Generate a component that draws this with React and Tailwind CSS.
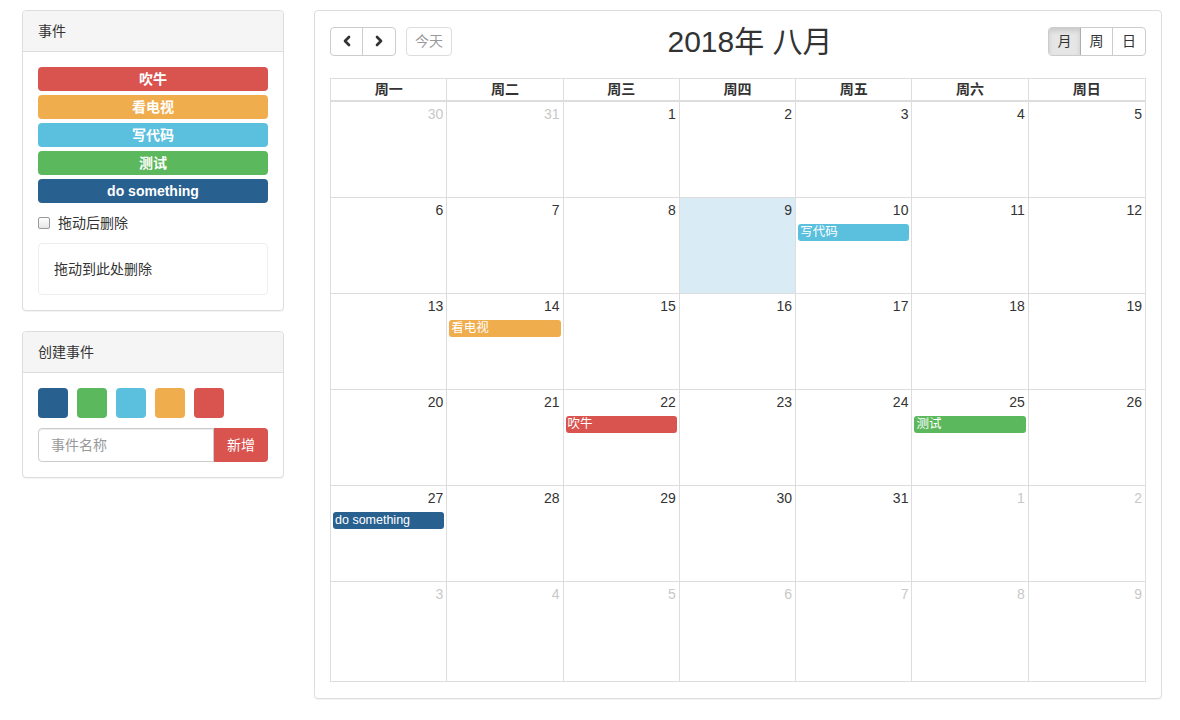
import { ChevronLeft, ChevronRight } from 'lucide-react';

const EVENT_COLORS = {
  red: 'bg-[#d9534f]',
  orange: 'bg-[#f0ad4e]',
  info: 'bg-[#5bc0de]',
  green: 'bg-[#5cb85c]',
  blue: 'bg-[#286090]',
};

const DRAG_EVENTS = [
  { title: '吹牛', color: 'red' },
  { title: '看电视', color: 'orange' },
  { title: '写代码', color: 'info' },
  { title: '测试', color: 'green' },
  { title: 'do something', color: 'blue' },
];

const SWATCHES = ['blue', 'green', 'info', 'orange', 'red'];

const WEEKDAYS = ['周一', '周二', '周三', '周四', '周五', '周六', '周日'];

// 日历数据：2018年8月，周一开头
const WEEKS = [
  [30, 31, 1, 2, 3, 4, 5],
  [6, 7, 8, 9, 10, 11, 12],
  [13, 14, 15, 16, 17, 18, 19],
  [20, 21, 22, 23, 24, 25, 26],
  [27, 28, 29, 30, 31, 1, 2],
  [3, 4, 5, 6, 7, 8, 9],
];

const CAL_EVENTS = {
  10: { title: '写代码', color: 'info' },
  14: { title: '看电视', color: 'orange' },
  22: { title: '吹牛', color: 'red' },
  25: { title: '测试', color: 'green' },
  27: { title: 'do something', color: 'blue' },
};

const isOtherMonth = (wi, day) => (wi === 0 && day > 20) || (wi >= 4 && day < 10);

const Panel = ({ title, children }) => (
  <div className="border border-[#ddd] rounded bg-white shadow-[0_1px_1px_rgba(0,0,0,0.05)]">
    <div className="h-[41px] px-[15px] flex items-center bg-[#f5f5f5] border-b border-[#ddd] rounded-t text-[14px] text-[#333]">
      {title}
    </div>
    <div className="p-[15px]">{children}</div>
  </div>
);

const Sidebar = () => (
  <div className="w-[262px] flex flex-col gap-[20px]">
    <Panel title="事件">
      <div className="flex flex-col gap-[4px]">
        {DRAG_EVENTS.map((e) => (
          <div
            key={e.title}
            className={`h-[24px] rounded ${EVENT_COLORS[e.color]} text-white font-bold text-[14px] flex items-center justify-center`}
          >
            {e.title}
          </div>
        ))}
      </div>
      <label className="flex items-center gap-[8px] my-[10px] h-[20px] text-[14px] text-[#333]">
        <span className="w-[12px] h-[12px] border border-[#999] rounded-[2px] bg-gradient-to-b from-white to-[#e6e6e6]"></span>
        拖动后删除
      </label>
      <div className="border border-[#eee] rounded h-[52px] px-[15px] flex items-center text-[14px] text-[#333]">
        拖动到此处删除
      </div>
    </Panel>

    <Panel title="创建事件">
      <div className="flex gap-[9px]">
        {SWATCHES.map((c) => (
          <div key={c} className={`w-[30px] h-[30px] rounded ${EVENT_COLORS[c]}`}></div>
        ))}
      </div>
      <div className="flex mt-[10px] h-[34px]">
        <div className="flex-1 border border-[#ccc] rounded-l px-[12px] flex items-center text-[14px] text-[#999] shadow-[inset_0_1px_1px_rgba(0,0,0,0.075)]">
          事件名称
        </div>
        <div className="w-[54px] bg-[#d9534f] text-white text-[14px] rounded-r flex items-center justify-center">
          新增
        </div>
      </div>
    </Panel>
  </div>
);

const Toolbar = () => (
  <div className="flex items-center h-[30px] mb-[22px]">
    <div className="flex items-center gap-[10px]">
      <div className="flex h-[29px] border border-[#ccc] rounded">
        <div className="w-[32px] flex items-center justify-center border-r border-[#ccc] text-[#333]">
          <ChevronLeft size={16} strokeWidth={4} />
        </div>
        <div className="w-[32px] flex items-center justify-center text-[#333]">
          <ChevronRight size={16} strokeWidth={4} />
        </div>
      </div>
      <div className="h-[29px] px-[8px] border border-[#ddd] rounded flex items-center text-[14px] text-[#999]">
        今天
      </div>
    </div>
    <div className="flex-1 flex justify-center">
      <h2 className="text-[30px] leading-none text-[#333] pt-[2px]">2018年 八月</h2>
    </div>
    <div className="flex h-[29px] border border-[#ccc] rounded text-[14px] text-[#333] overflow-hidden">
      <div className="w-[32px] flex items-center justify-center bg-[#e6e6e6] border-r border-[#adadad] shadow-[inset_0_3px_5px_rgba(0,0,0,0.125)]">
        月
      </div>
      <div className="w-[32px] flex items-center justify-center border-r border-[#ccc]">周</div>
      <div className="w-[32px] flex items-center justify-center">日</div>
    </div>
  </div>
);

const Calendar = () => (
  <div className="flex-1 border border-[#ddd] rounded bg-white px-[15px] pt-[15px] pb-[16px] shadow-[0_1px_1px_rgba(0,0,0,0.05)]">
    <Toolbar />
    <div className="border border-[#ddd]">
      <div className="grid grid-cols-7 h-[23px] border-b-2 border-[#ddd]">
        {WEEKDAYS.map((d, i) => (
          <div
            key={d}
            className={`flex items-center justify-center text-[14px] font-bold text-[#333] ${i < 6 ? 'border-r border-[#ddd]' : ''}`}
          >
            {d}
          </div>
        ))}
      </div>
      {WEEKS.map((week, wi) => (
        <div
          key={wi}
          className={`grid grid-cols-7 ${wi < 5 ? 'h-[96px] border-b border-[#ddd]' : 'h-[99px]'}`}
        >
          {week.map((day, di) => {
            const other = isOtherMonth(wi, day);
            const ev = !other ? CAL_EVENTS[day] : null;
            const today = !other && day === 9;
            return (
              <div
                key={di}
                className={`${di < 6 ? 'border-r border-[#ddd]' : ''} ${today ? 'bg-[#d9ebf5]' : ''}`}
              >
                <div
                  className={`text-right pr-[3px] pt-[2px] h-[23px] text-[14px] leading-[20px] ${other ? 'text-[#c8c8c8]' : 'text-[#333]'}`}
                >
                  {day}
                </div>
                {ev && (
                  <div
                    className={`mx-[2px] mt-[3px] h-[17px] rounded-[3px] ${EVENT_COLORS[ev.color]} text-white text-[12.5px] leading-[17px] px-[2px]`}
                  >
                    {ev.title}
                  </div>
                )}
              </div>
            );
          })}
        </div>
      ))}
    </div>
  </div>
);

export default function App() {
  return (
    <div className="w-[1180px] h-[720px] bg-white font-['Liberation_Sans','Noto_Sans_CJK_SC',sans-serif] flex gap-[30px] pl-[22px] pr-[18px] pt-[10px] items-start">
      <Sidebar />
      <Calendar />
    </div>
  );
}
